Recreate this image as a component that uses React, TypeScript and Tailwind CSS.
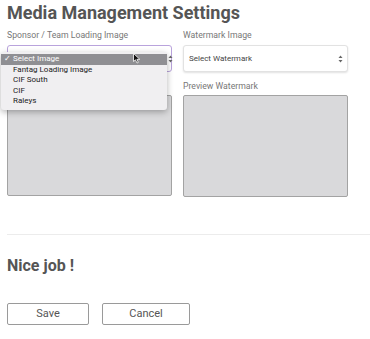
import React from "react";

const options = ["Select Image", "Fantag Loading Image", "CIF South", "CIF", "Raleys"];

function SelectArrows() {
  return (
    <svg width="5" height="8" viewBox="0 0 5 8" className="shrink-0">
      <path d="M2.5 0.5 L4.5 3 H0.5 Z" fill="#666" />
      <path d="M2.5 7.5 L4.5 5 H0.5 Z" fill="#666" />
    </svg>
  );
}

function Cursor() {
  return (
    <svg width="8" height="11" viewBox="0 0 8 11" className="absolute left-[133px] top-[53px]">
      <path d="M0.5 0.5 V8.5 L2.5 6.8 L4 10 L5.3 9.4 L3.9 6.3 H6.8 Z" fill="#111" stroke="#fff" strokeWidth="0.8" />
    </svg>
  );
}

export default function App() {
  return (
    <div
      className="relative w-[370px] h-[339px] bg-white overflow-hidden"
      style={{ fontFamily: "Roboto, 'Liberation Sans', sans-serif" }}
    >
      <div className="pl-[7px] pt-[1px]">
        <h1 className="text-[18px] leading-[24px] font-bold text-[#555]">Media Management Settings</h1>

        <div className="mt-[4px] flex gap-[11px]">
          {/* left column */}
          <div className="w-[165px]">
            <div className="text-[8.7px] leading-[12px] text-[#777]">Sponsor / Team Loading Image</div>
            <div className="mt-[4px] h-[27px] rounded-[3px] border border-[#b9a3dc] bg-white" />
            <div className="mt-[23px] h-[101px] rounded-[2px] border border-[#a3a3a3] bg-[#d9d9db]" />
          </div>
          {/* right column */}
          <div className="w-[165px]">
            <div className="text-[8.7px] leading-[12px] text-[#777]">Watermark Image</div>
            <div className="mt-[4px] h-[27px] rounded-[3px] border border-[#e2e2e2] bg-white shadow-[0_1px_2px_rgba(0,0,0,0.12)] flex items-center justify-between pl-[5px] pr-[4px]">
              <span className="text-[8px] text-[#444]">Select Watermark</span>
              <SelectArrows />
            </div>
            <div className="mt-[8px] text-[8.7px] leading-[12px] text-[#777]">Preview Watermark</div>
            <div className="mt-[3px] h-[102px] rounded-[2px] border border-[#a3a3a3] bg-[#d9d9db]" />
          </div>
        </div>

        <div className="mt-[37px] h-px bg-[#ececec]" />

        <div className="mt-[21px] text-[16px] leading-[20px] font-bold text-[#555]">Nice job !</div>

        <div className="mt-[27px] flex gap-[13px]">
          <button className="w-[82px] h-[22px] rounded-[2px] border border-[#9a9a9a] bg-white text-[11px] text-[#555]">
            Save
          </button>
          <button className="w-[88px] h-[22px] rounded-[2px] border border-[#9a9a9a] bg-white text-[11px] text-[#555]">
            Cancel
          </button>
        </div>
      </div>

      {/* open select menu */}
      <div className="absolute left-[1px] top-[52px] w-[166px] rounded-[3px] bg-[#f0eff1] shadow-[0_2px_6px_rgba(0,0,0,0.3)] pt-[2px] pb-[3px]">
        {options.map((o, i) => (
          <div
            key={o}
            className={
              i === 0
                ? "h-[10.5px] flex items-center bg-[#8f8f93] text-white text-[8px] pl-[3px]"
                : "h-[10.5px] flex items-center text-[#222] text-[8px] pl-[12px]"
            }
          >
            {i === 0 && <span className="w-[9px]">✓</span>}
            {o}
          </div>
        ))}
      </div>
      <div className="absolute left-[168px] top-[55px]">
        <SelectArrows />
      </div>
      <Cursor />
    </div>
  );
}
